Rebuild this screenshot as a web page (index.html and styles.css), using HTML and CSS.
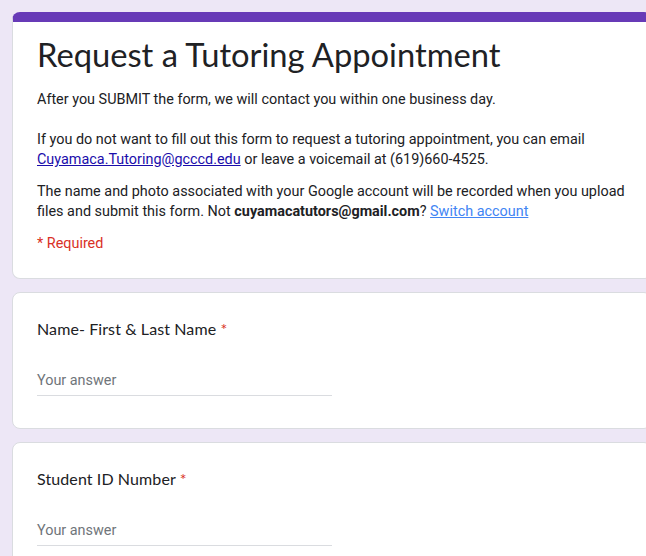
FILE: index.html
```html
<!DOCTYPE html>
<html>
<head>
<meta charset="utf-8">
<link rel="stylesheet" href="styles.css">
</head>
<body>
<div class="page">
  <div class="card header-card">
    <div class="card-body">
      <h1 class="form-title">Request a Tutoring Appointment</h1>
      <div class="desc">
        <p>After you SUBMIT the form, we will contact you within one business day.</p>
        <p class="blank">&nbsp;</p>
        <p>If you do not want to fill out this form to request a tutoring appointment, you can email <a class="mail" href="#">Cuyamaca.Tutoring@gcccd.edu</a> or leave a voicemail at (619)660-4525.</p>
      </div>
      <p class="account">The name and photo associated with your Google account will be recorded when you upload files and submit this form. Not <b>cuyamacatutors@gmail.com</b>? <a class="switch" href="#">Switch account</a></p>
      <p class="required">* Required</p>
    </div>
  </div>

  <div class="card question">
    <div class="q-title">Name- First &amp; Last Name <span class="star">*</span></div>
    <div class="answer">Your answer</div>
  </div>

  <div class="card question">
    <div class="q-title">Student ID Number <span class="star">*</span></div>
    <div class="answer">Your answer</div>
  </div>
</div>
</body>
</html>
```

FILE: styles.css
```css
html, body {
  margin: 0;
  padding: 0;
  overflow: hidden;
  background: #ede7f6;
}

.page {
  padding: 12px 0 0 12px;
  display: flex;
  flex-direction: column;
  gap: 13px;
  width: 640px;
}

.card {
  background: #fff;
  border: 1px solid #dadce0;
  border-radius: 8px;
  width: 640px;
  box-sizing: border-box;
}

.header-card {
  border-top: 10px solid #673ab7;
}

.card-body {
  padding: 13px 24px 24px 24px;
}

.form-title {
  margin: 0 0 15px 0;
  font-family: "Lato", "Open Sans", sans-serif;
  font-weight: 400;
  font-size: 32.7px;
  line-height: 40px;
  color: #202124;
}

.desc p, .account, .required {
  margin: 0;
  font-family: Roboto, "Liberation Sans", sans-serif;
  font-size: 14.4px;
  line-height: 20px;
  color: #202124;
}

.account {
  margin-top: 12px;
}

.required {
  margin-top: 12px;
  color: #d93025;
}

.mail {
  color: #1a0dab;
  text-decoration: underline;
}

.switch {
  color: #4285f4;
  text-decoration: underline;
}

.account b {
  font-weight: 700;
}

.question {
  padding: 24px 24px 32px 24px;
}

.q-title {
  font-family: "Lato", "Open Sans", sans-serif;
  font-size: 16px;
  line-height: 24px;
  letter-spacing: 0.1px;
  color: #202124;
}

.star {
  color: #d93025;
}

.answer {
  margin-top: 30px;
  width: 295px;
  font-family: Roboto, "Liberation Sans", sans-serif;
  font-size: 14.4px;
  line-height: 20px;
  color: #70757a;
  padding-bottom: 4px;
  border-bottom: 1px solid #dadce0;
}
```
